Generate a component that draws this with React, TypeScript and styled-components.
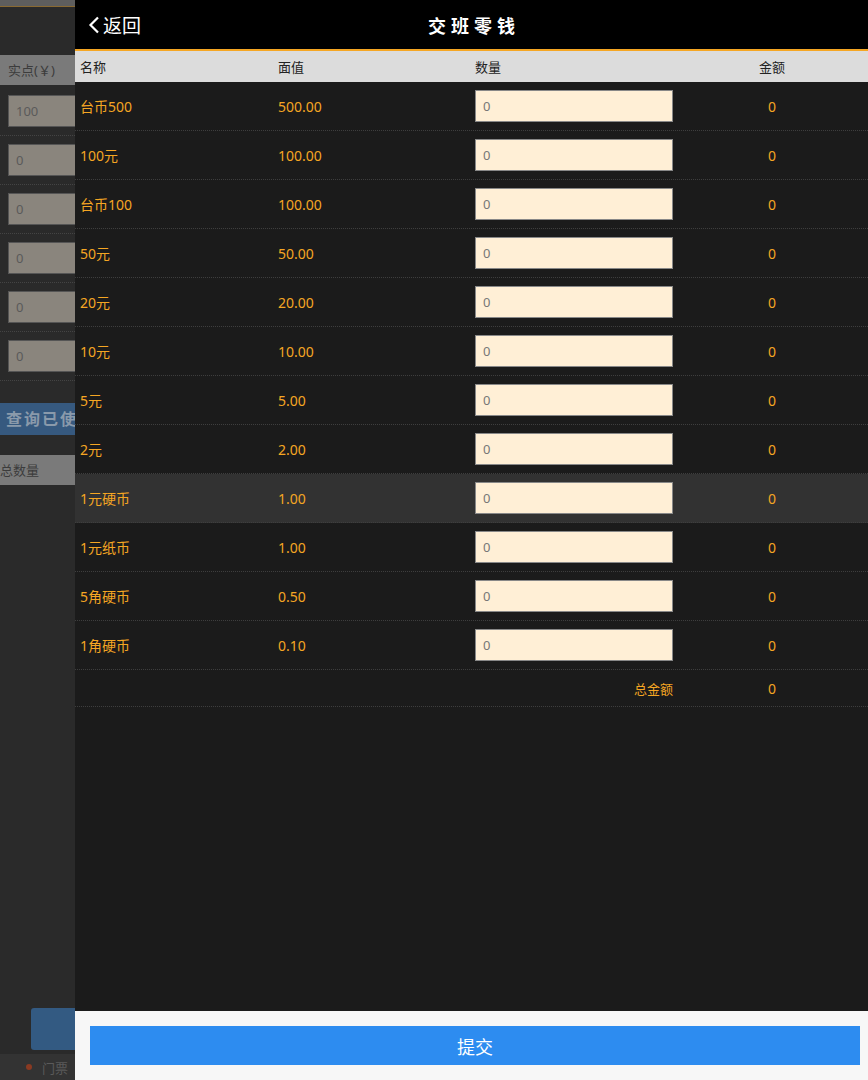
import { createGlobalStyle } from "styled-components";
import styled from "styled-components";

const GlobalStyle = createGlobalStyle`
  html, body {
    margin: 0;
    padding: 0;
    background: #2a2a2a;
  }
  * {
    box-sizing: border-box;
  }
  body {
    font-family: "Noto Sans", "Noto Sans CJK SC", sans-serif;
  }
`;

type Coin = { name: string; value: string };

const coins: Coin[] = [
  { name: "台币500", value: "500.00" },
  { name: "100元", value: "100.00" },
  { name: "台币100", value: "100.00" },
  { name: "50元", value: "50.00" },
  { name: "20元", value: "20.00" },
  { name: "10元", value: "10.00" },
  { name: "5元", value: "5.00" },
  { name: "2元", value: "2.00" },
  { name: "1元硬币", value: "1.00" },
  { name: "1元纸币", value: "1.00" },
  { name: "5角硬币", value: "0.50" },
  { name: "1角硬币", value: "0.10" },
];

const backInputs = ["100", "0", "0", "0", "0", "0"];

export default function App() {
  return (
    <Screen>
      <GlobalStyle />
      <BackPage>
        <BackTop />
        <BackSpacer />
        <BackHead>实点(￥)</BackHead>
        <BackList>
          {backInputs.map((v, i) => (
            <BackRow key={i}>
              <BackInput>{v}</BackInput>
            </BackRow>
          ))}
        </BackList>
        <BackQuery>查询已使</BackQuery>
        <BackHead className="total">总数量</BackHead>
        <BackFill />
        <BackButtonRow>
          <BackButton />
        </BackButtonRow>
        <BackBar>
          <Dot />
          门票
        </BackBar>
      </BackPage>

      <Drawer>
        <Header>
          <Back>
            <svg width="12" height="18" viewBox="0 0 12 18">
              <path
                d="M10 1.5 L2.5 9 L10 16.5"
                fill="none"
                stroke="#fff"
                strokeWidth="2.2"
              />
            </svg>
            返回
          </Back>
          <Title>交班零钱</Title>
        </Header>
        <TableHead>
          <HeadCell>名称</HeadCell>
          <HeadCell>面值</HeadCell>
          <HeadCell>数量</HeadCell>
          <HeadCell className="center">金额</HeadCell>
        </TableHead>
        <Body>
          {coins.map((c, i) => (
            <Row key={i} $active={i === 8}>
              <Cell>{c.name}</Cell>
              <Cell>{c.value}</Cell>
              <Cell>
                <QtyInput placeholder="0" />
              </Cell>
              <Cell className="center">0</Cell>
            </Row>
          ))}
          <TotalRow>
            <Cell />
            <Cell />
            <Cell className="right">总金额</Cell>
            <Cell className="center">0</Cell>
          </TotalRow>
        </Body>
        <Footer>
          <Submit>提交</Submit>
        </Footer>
      </Drawer>
    </Screen>
  );
}

const Screen = styled.div`
  position: relative;
  width: 868px;
  height: 1080px;
  overflow: hidden;
  background: #2a2a2a;
`;

/* page underneath the drawer, only its left strip shows */
const BackPage = styled.div`
  display: flex;
  flex-direction: column;
  width: 75px;
  height: 100%;
  overflow: hidden;
  white-space: nowrap;
`;

const BackTop = styled.div`
  height: 7px;
  background: #5e5e5e;
  border-bottom: 1px solid #8a6a32;
`;

const BackSpacer = styled.div`
  height: 48px;
`;

const BackHead = styled.div`
  height: 30px;
  line-height: 30px;
  background: #7a7a7a;
  color: #3c3c3c;
  font-size: 13px;
  padding-left: 8px;

  &.total {
    padding-left: 0;
    margin-top: 20px;
  }
`;

const BackList = styled.div`
  padding-top: 2px;
`;

const BackRow = styled.div`
  height: 49px;
  display: flex;
  align-items: center;
  padding-left: 8px;
  border-bottom: 1px dotted #444;
`;

const BackInput = styled.div`
  width: 200px;
  flex-shrink: 0;
  height: 32px;
  background: #8a857d;
  border: 1px solid #555;
  color: #5a5a5a;
  font-size: 13px;
  line-height: 30px;
  padding-left: 7px;
`;

const BackQuery = styled.div`
  margin-top: 22px;
  height: 32px;
  line-height: 32px;
  background: #36597f;
  color: #8a9aab;
  font-size: 16px;
  font-weight: bold;
  letter-spacing: 2px;
  padding-left: 6px;
`;

const BackFill = styled.div`
  flex: 1;
`;

const BackButtonRow = styled.div`
  padding-left: 31px;
  margin-bottom: 4px;
`;

const BackButton = styled.div`
  width: 200px;
  height: 42px;
  background: #335a82;
  border-radius: 3px;
`;

const BackBar = styled.div`
  height: 26px;
  background: #333;
  color: #5a5a5a;
  font-size: 13px;
  display: flex;
  align-items: center;
  padding-left: 26px;
  gap: 10px;
`;

const Dot = styled.span`
  width: 6px;
  height: 6px;
  flex-shrink: 0;
  border-radius: 50%;
  background: #8a3a22;
`;

/* drawer */
const Drawer = styled.div`
  position: absolute;
  top: 0;
  left: 75px;
  right: 0;
  bottom: 0;
  display: flex;
  flex-direction: column;
  background: #1b1b1b;
`;

const Header = styled.div`
  height: 51px;
  flex-shrink: 0;
  background: #000;
  border-bottom: 2px solid #f5a623;
  position: relative;
  display: flex;
  align-items: center;
  justify-content: center;
`;

const Back = styled.div`
  position: absolute;
  left: 13px;
  top: 0;
  height: 49px;
  display: flex;
  align-items: center;
  gap: 3px;
  color: #fff;
  font-size: 19px;
`;

const Title = styled.div`
  color: #fff;
  font-size: 18px;
  font-weight: bold;
  letter-spacing: 5px;
  margin-left: 5px;
`;

const TableHead = styled.div`
  height: 31px;
  flex-shrink: 0;
  background: #dcdcdc;
  display: grid;
  grid-template-columns: 198px 197px 200px 1fr;
  align-items: center;
`;

const HeadCell = styled.div`
  padding-left: 5px;
  color: #222;
  font-size: 13px;

  &.center {
    text-align: center;
    padding-left: 6px;
  }
`;

const Body = styled.div`
  flex: 1;
`;

const Row = styled.div<{ $active?: boolean }>`
  height: 49px;
  display: grid;
  grid-template-columns: 198px 197px 200px 1fr;
  align-items: center;
  border-bottom: 1px dotted #3e3e3e;
  background: ${(p) => (p.$active ? "#323232" : "transparent")};
`;

const TotalRow = styled(Row)`
  height: 37px;
`;

const Cell = styled.div`
  padding-left: 5px;
  color: #f5a623;
  font-size: 14px;

  &.center {
    text-align: center;
    padding-left: 6px;
  }

  &.right {
    text-align: right;
    padding-left: 0;
    margin-right: -3px;
    font-size: 13px;
  }
`;

const QtyInput = styled.input`
  display: block;
  width: 198px;
  height: 32px;
  background: #ffefd6;
  border: 1px solid #888;
  padding: 0 7px;
  font-size: 13px;
  font-family: "Noto Sans", sans-serif;
  outline: none;

  &::placeholder {
    color: #777;
  }
`;

const Footer = styled.div`
  height: 69px;
  flex-shrink: 0;
  background: #f7f7f7;
  padding: 15px 8px 0 15px;
`;

const Submit = styled.button`
  display: block;
  width: 100%;
  height: 39px;
  border: none;
  background: #2d8cf0;
  color: #fff;
  font-size: 18px;
  font-family: "Noto Sans", "Noto Sans CJK SC", sans-serif;
  cursor: pointer;
`;
